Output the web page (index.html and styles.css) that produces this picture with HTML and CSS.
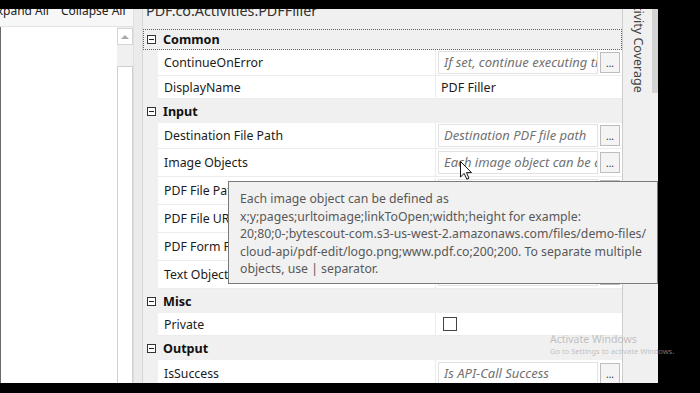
FILE: index.html
```html
<!DOCTYPE html>
<html lang="en">
<head>
  <meta charset="UTF-8" />
  <meta name="viewport" content="width=device-width, initial-scale=1.0"/>
  <title>PDF Filler Properties</title>
  <link rel="stylesheet" href="styles.css">
</head>
<body>
  <div class="screen">
    <div class="outline">
      <div class="outline-toolbar">
        <span class="tool-link first">Expand All</span>
        <span class="tool-link">Collapse All</span>
      </div>
      <div class="outline-body">
        <div class="outline-list"></div>
        <div class="vscroll">
          <div class="vscroll-up">
            <svg width="8" height="5" viewBox="0 0 8 5"><path d="M0 5 L4 1 L8 5 Z" fill="#a8a8a8"/></svg>
          </div>
          <div class="vscroll-track"></div>
          <div class="vscroll-thumb"></div>
        </div>
      </div>
    </div>

    <div class="splitter"></div>

    <div class="props">
      <div class="props-title"><span>PDF.co.Activities.PDFFiller</span></div>

      <div class="cat focused"><span class="toggle"></span><span class="cat-label">Common</span></div>
      <div class="prop mid">
        <div class="prop-name">ContinueOnError</div>
        <div class="prop-value"><div class="field">If set, continue executing the rest</div><div class="more">...</div></div>
      </div>
      <div class="prop short">
        <div class="prop-name">DisplayName</div>
        <div class="prop-value"><span class="plain">PDF Filler</span></div>
      </div>

      <div class="cat"><span class="toggle"></span><span class="cat-label">Input</span></div>
      <div class="prop mid">
        <div class="prop-name">Destination File Path</div>
        <div class="prop-value"><div class="field">Destination PDF file path</div><div class="more">...</div></div>
      </div>
      <div class="prop">
        <div class="prop-name">Image Objects</div>
        <div class="prop-value"><div class="field">Each image object can be defined</div><div class="more">...</div></div>
      </div>
      <div class="prop">
        <div class="prop-name">PDF File Path</div>
        <div class="prop-value"><div class="field">Source PDF file path</div><div class="more">...</div></div>
      </div>
      <div class="prop">
        <div class="prop-name">PDF File URL</div>
        <div class="prop-value"><div class="field">Source PDF file URL</div><div class="more">...</div></div>
      </div>
      <div class="prop">
        <div class="prop-name">PDF Form Fields</div>
        <div class="prop-value"><div class="field">Form fields to fill</div><div class="more">...</div></div>
      </div>
      <div class="prop">
        <div class="prop-name">Text Objects</div>
        <div class="prop-value"><div class="field">Each text object can be defined</div><div class="more">...</div></div>
      </div>

      <div class="cat"><span class="toggle"></span><span class="cat-label">Misc</span></div>
      <div class="prop short">
        <div class="prop-name">Private</div>
        <div class="prop-value"><span class="checkbox"></span></div>
      </div>

      <div class="cat"><span class="toggle"></span><span class="cat-label">Output</span></div>
      <div class="prop">
        <div class="prop-name">IsSuccess</div>
        <div class="prop-value"><div class="field">Is API-Call Success</div><div class="more">...</div></div>
      </div>
    </div>

    <div class="side-tab">
      <div class="side-label">Activity Coverage</div>
      <div class="side-strip"></div>
    </div>
  </div>

  <div class="tooltip">
    Each image object can be defined as<br>
    x;y;pages;urltoimage;linkToOpen;width;height for example:<br>
    20;80;0-;bytescout-com.s3-us-west-2.amazonaws.com/files/demo-files/<br>
    cloud-api/pdf-edit/logo.png;www.pdf.co;200;200. To separate multiple<br>
    objects, use | separator.
  </div>

  <div class="watermark">
    <div class="wm-title">Activate Windows</div>
    <div class="wm-sub">Go to Settings to activate Windows.</div>
  </div>

  <svg class="cursor" width="12" height="19" viewBox="0 0 12 19">
    <path d="M0.5 0.5 L0.5 16 L4.2 12.4 L6.8 18.2 L9 17.2 L6.5 11.6 L11.5 11.6 Z" fill="#fff" stroke="#111" stroke-width="1"/>
  </svg>
</body>
</html>
```

FILE: styles.css
```css
body {
  margin: 0;
  background-color: #000;
  font-family: 'Noto Sans', sans-serif;
  font-size: 12.3px;
  color: #1b1b1b;
  width: 700px;
  height: 393px;
  overflow: hidden;
}

.screen {
  margin-top: 9px;
  width: 658px;
  height: 374px;
  display: flex;
  background-color: #f0f0f0;
  overflow: hidden;
}

/* left outline panel */
.outline {
  width: 133px;
  display: flex;
  flex-direction: column;
}

.outline-toolbar {
  height: 17px;
  background-color: #f7f7f7;
  display: flex;
  gap: 12px;
  font-size: 12px;
  line-height: 12px;
  white-space: nowrap;
}

.tool-link {
  margin-top: -4px;
  color: #222;
}

.tool-link.first {
  margin-left: -10px;
}

.outline-body {
  flex: 1;
  display: flex;
  border-top: 1px solid #e2e2e2;
}

.outline-list {
  flex: 1;
  background-color: #fff;
  border-left: 1px solid #6a6a6a;
}

.vscroll {
  width: 16px;
  display: flex;
  flex-direction: column;
  background-color: #f0f0f0;
}

.vscroll-up {
  height: 17px;
  margin-top: 1px;
  background-color: #fff;
  border: 1px solid #d4d4d4;
  display: flex;
  align-items: center;
  justify-content: center;
  box-sizing: border-box;
}

.vscroll-track {
  height: 21px;
}

.vscroll-thumb {
  flex: 1;
  background-color: #fff;
  border: 1px solid #cfcfcf;
  border-bottom: none;
}

.splitter {
  width: 10px;
  background-color: #ebebeb;
  border-left: 1px solid #e0e0e0;
  border-right: 1px solid #d6d6d6;
  box-sizing: border-box;
}

/* property grid */
.props {
  width: 480px;
  border-right: 1px solid #cdcdcd;
  box-sizing: border-box;
  display: flex;
  flex-direction: column;
}

.props-title {
  height: 20px;
  flex-shrink: 0;
  font-size: 14.3px;
  line-height: 12px;
  padding-left: 3px;
  color: #333;
  white-space: nowrap;
}

.props-title span {
  display: block;
  margin-top: -4px;
}

.cat {
  height: 24px;
  flex-shrink: 0;
  display: flex;
  align-items: center;
  gap: 7px;
  padding-left: 4px;
  box-sizing: border-box;
}

.cat.focused {
  height: 21px;
  border: 1px dotted #666;
  padding-left: 3px;
}

.toggle {
  width: 9px;
  height: 9px;
  border: 1px solid #333;
  box-sizing: border-box;
  display: flex;
  align-items: center;
  justify-content: center;
  background-color: #fff;
}

.toggle::after {
  content: '';
  width: 5px;
  height: 1px;
  background-color: #222;
}

.cat-label {
  font-weight: bold;
  font-size: 12.6px;
  color: #111;
}

.prop {
  height: 28px;
  flex-shrink: 0;
  display: grid;
  grid-template-columns: 15px 277px 1fr;
}

.prop.mid {
  height: 26px;
}

.prop.short {
  height: 23px;
}

.prop-name {
  grid-column: 2;
  background-color: #fff;
  border-bottom: 1px solid #ececec;
  padding-left: 6px;
  display: flex;
  align-items: center;
  white-space: nowrap;
  overflow: hidden;
}

.prop-value {
  background-color: #fff;
  border-left: 1px solid #ececec;
  border-bottom: 1px solid #ececec;
  padding: 0 2px;
  display: flex;
  align-items: center;
  gap: 2px;
}

.field {
  width: 160px;
  height: 23px;
  box-sizing: border-box;
  border: 1px solid #e2e2e2;
  padding-left: 5px;
  font-size: 13px;
  font-style: italic;
  color: #727272;
  line-height: 20px;
  white-space: nowrap;
  overflow: hidden;
}

.more {
  width: 20px;
  height: 21px;
  box-sizing: border-box;
  border: 1px solid #bdbdbd;
  background-color: #f4f4f4;
  font-size: 10px;
  line-height: 20px;
  text-align: center;
  color: #333;
}

.plain {
  padding-left: 3px;
  font-size: 12.5px;
}

.checkbox {
  width: 14px;
  height: 14px;
  margin-left: 5px;
  border: 1px solid #444;
  box-sizing: border-box;
  background-color: #fff;
}

/* right docked tab */
.side-tab {
  flex: 1;
  display: flex;
}

.side-label {
  flex: 1;
  writing-mode: vertical-rl;
  margin-top: -17px;
  padding-left: 2px;
  padding-right: 5px;
  font-size: 12.5px;
  color: #444;
  white-space: nowrap;
}

.side-strip {
  width: 6px;
  height: 84px;
  background-color: #d3d3d3;
}

/* overlays */
.tooltip {
  position: absolute;
  left: 228px;
  top: 181px;
  width: 430px;
  height: 103px;
  box-sizing: border-box;
  background-color: #f1f1f1;
  border: 1px solid #7a7a7a;
  padding: 8px 11px;
  font-size: 12.25px;
  line-height: 17.5px;
  color: #585858;
  white-space: nowrap;
}

.watermark {
  position: absolute;
  left: 550px;
  top: 332px;
  color: rgba(170, 170, 170, 0.7);
  white-space: nowrap;
}

.wm-title {
  font-size: 10.5px;
  line-height: 14px;
}

.wm-sub {
  font-size: 7.5px;
  line-height: 11px;
}

.cursor {
  position: absolute;
  left: 460px;
  top: 161px;
}
```
